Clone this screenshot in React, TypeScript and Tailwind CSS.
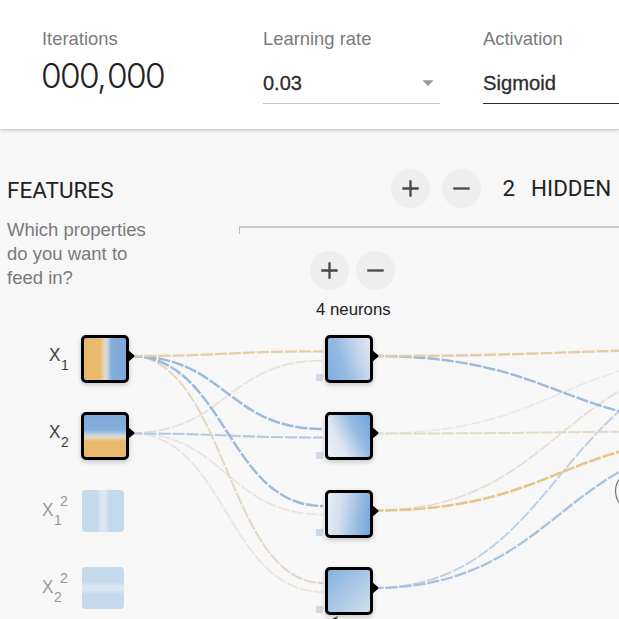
const ARIAL = "font-['Liberation_Sans',Arial,sans-serif]";

function RoundButton({ kind, className }: { kind: 'add' | 'remove'; className?: string }) {
  return (
    <button className={`flex size-[39px] items-center justify-center rounded-full bg-[#eeeeee] ${className ?? ''}`}>
      <svg width="17" height="17" viewBox="0 0 17 17" stroke="#484848" strokeWidth="2.3" fill="none">
        <path d={kind === 'add' ? 'M0.3 8.5H16.7M8.5 0.3V16.7' : 'M0.3 8.5H16.7'} />
      </svg>
    </button>
  );
}

type Link = { from: [number, number]; to: [number, number]; color: string; width: number };

const links: Link[] = [
  { from: [130, 433], to: [323, 592], color: '#e7e2da', width: 1.6 },
  { from: [130, 433], to: [323, 514.5], color: '#e6e3de', width: 1.6 },
  { from: [130, 433], to: [323, 360.5], color: '#e5e1db', width: 1.7 },
  { from: [130, 433.5], to: [323, 437.5], color: '#b5cae2', width: 2.1 },
  { from: [130, 356], to: [323, 583], color: '#e4d6bf', width: 1.9 },
  { from: [130, 356], to: [323, 506], color: '#9cbadc', width: 2.5 },
  { from: [130, 356], to: [323, 429], color: '#9cbadc', width: 2.5 },
  { from: [130, 356], to: [323, 351.3], color: '#e5cda5', width: 2.3 },
  { from: [373, 433.5], to: [747, 353.8], color: '#e9e7e4', width: 1.6 },
  { from: [373, 510.5], to: [747, 358.3], color: '#e4ddd2', width: 1.7 },
  { from: [373, 588], to: [747, 362.8], color: '#bdd0e5', width: 1.9 },
  { from: [373, 588], to: [747, 440], color: '#a7c1de', width: 2.3 },
  { from: [373, 510.5], to: [747, 435.5], color: '#e6c48e', width: 2.6 },
  { from: [373, 433.5], to: [747, 431.2], color: '#e4dac8', width: 2 },
  { from: [373, 356], to: [747, 426.5], color: '#9cbadc', width: 2.4 },
  { from: [373, 356], to: [747, 349.3], color: '#e2cda9', width: 2.4 },
];

function diagonal({ from, to }: Link) {
  const mid = (from[0] + to[0]) / 2;
  return `M${from[0]} ${from[1]}C${mid} ${from[1]} ${mid} ${to[1]} ${to[0]} ${to[1]}`;
}

const nodes = [
  { place: 'left-[81px] top-[10px]', fill: 'bg-[linear-gradient(90deg,#e9b96b_0%,#e8bb70_38%,#e6d9c2_50%,#d3dbe2_54%,#84aedb_65%,#7da9d9_100%)]' },
  { place: 'left-[81px] top-[87px]', fill: 'bg-[linear-gradient(180deg,#7da9d9_0%,#84aedb_36%,#c9d6e2_48%,#e6d9c2_53%,#e8bb70_63%,#e9b96b_100%)]' },
  { place: 'left-[325px] top-[10px]', fill: 'bg-[linear-gradient(72deg,#7fadde_0%,#93b9e1_35%,#c0d4ea_68%,#e2e8f2_100%)]' },
  { place: 'left-[325px] top-[87px]', fill: 'bg-[linear-gradient(62deg,#f0f2f6_0%,#dbe5f0_32%,#96bbe2_65%,#6fa4db_100%)]' },
  { place: 'left-[325px] top-[164.5px]', fill: 'bg-[linear-gradient(98deg,#e6ecf4_0%,#d3e0ef_30%,#98bce2_70%,#72a6db_100%)]' },
  { place: 'left-[325px] top-[242px]', fill: 'bg-[linear-gradient(135deg,#84b1df_0%,#a3c3e5_40%,#bad0e9_70%,#d2e0f0_100%)]' },
];

function Node({ place, fill }: { place: string; fill: string }) {
  return (
    <div className={`absolute size-12 ${place}`}>
      <div className={`size-full rounded-[5px] border-[3px] border-black shadow-[0_2px_5px_rgba(0,0,0,0.2)] ${fill} bg-origin-padding bg-no-repeat`} />
      <svg className="absolute -right-[6px] top-[15px]" width="7" height="12" viewBox="0 0 7 12">
        <path d="M0 0L6 5Q7 6 6 7L0 12Z" />
      </svg>
    </div>
  );
}

function Label({ place, sub, sup, inactive }: { place: string; sub: string; sup?: string; inactive?: boolean }) {
  return (
    <div className={`absolute h-8 w-8 ${ARIAL} ${place} ${inactive ? 'text-[#999999]' : 'text-[#404040]'}`}>
      <span className="block origin-left scale-x-90 text-[19px] leading-[22px]">X</span>
      <span className="absolute left-[12px] top-[13px] text-[14px] leading-4">{sub}</span>
      {sup && <span className="absolute left-[18px] top-[-6px] text-[14px] leading-4">{sup}</span>}
    </div>
  );
}

function Network() {
  return (
    <section className="relative h-[294px] overflow-hidden">
      <svg className="absolute inset-0" width="619" height="294" viewBox="0 325 619 294" fill="none">
        {links.map((link, i) => (
          <path key={i} d={diagonal(link)} stroke={link.color} strokeWidth={link.width} strokeDasharray="12.3 1.8" strokeDashoffset={link.from[0] === 130 ? 0 : 2} />
        ))}
        <circle cx="635.5" cy="491" r="20" stroke="#777" strokeWidth="1.2" fill="#fbfbfb" />
        <path d="M332 619L338 616L336.5 619Z" fill="#333" />
      </svg>
      <i className="absolute left-[316px] top-[49px] size-[7px] bg-[#d0dceb]" />
      <i className="absolute left-[316px] top-[126.5px] size-[7px] bg-[#d0dceb]" />
      <i className="absolute left-[316px] top-[204px] size-[7px] bg-[#cbdbea]" />
      <i className="absolute left-[316px] top-[281px] size-[7px] bg-[#cfdce8]" />
      {nodes.map((n) => (
        <Node key={n.place} {...n} />
      ))}
      <div className="absolute left-[82px] top-[165px] size-[42px] rounded-[4px] bg-[linear-gradient(90deg,#c5d9ec_0%,#c5d9ec_36%,#dbe6f1_45%,#dbe6f1_56%,#c5d9ec_65%)]" />
      <div className="absolute left-[82px] top-[242px] size-[42px] rounded-[4px] bg-[linear-gradient(180deg,#c5d9ec_0%,#c5d9ec_36%,#dbe6f1_45%,#dbe6f1_56%,#c5d9ec_65%)]" />
      <Label place="left-[49px] top-[19px]" sub="1" />
      <Label place="left-[49px] top-[96px]" sub="2" />
      <Label place="left-[42px] top-[174px]" sub="1" sup="2" inactive />
      <Label place="left-[42px] top-[251px]" sub="2" sup="2" inactive />
    </section>
  );
}

export default function App() {
  return (
    <div className={`h-[619px] w-[619px] overflow-hidden bg-[#f7f7f7] ${ARIAL}`}>
      <header className="relative flex h-[129px] bg-white pl-[42px] pt-[28px] shadow-[0_1px_3px_rgba(0,0,0,0.24)]">
        <div className="w-[221px] shrink-0">
          <div className="text-[18.4px] leading-[22px] text-[#7a7a7a]">Iterations</div>
          <div className="mt-[5px] -ml-px font-[Inter,sans-serif] text-[33.5px] font-light leading-[42px] tracking-[-1.7px] text-[#222222]">
            000<span className="mr-[2px]">,</span>000
          </div>
        </div>
        <div className="mr-[43px] w-[177px] shrink-0">
          <div className="text-[18.4px] leading-[22px] text-[#7a7a7a]">Learning rate</div>
          <div className="mt-[19px] flex h-[35px] items-start justify-between border-b border-[#c4c4c4] pr-[6px] text-[20px] leading-[28px] text-[#2c2c2c] [-webkit-text-stroke:0.3px_#2c2c2c]">
            0.03
            <svg className="mt-[11px]" width="12" height="7" viewBox="0 0 12 7">
              <path d="M0.5 0.3H11.5L6 6.3Z" fill="#999" />
            </svg>
          </div>
        </div>
        <div className="w-[177px] shrink-0">
          <div className="text-[18.4px] leading-[22px] text-[#7a7a7a]">Activation</div>
          <div className="mt-[19px] h-[35px] border-b border-[#2d2d44] text-[20.2px] leading-[28px] text-[#2c2c2c] [-webkit-text-stroke:0.3px_#2c2c2c]">Sigmoid</div>
        </div>
      </header>
      <div className="flex h-[196px]">
        <section className="w-[239px] shrink-0 pl-[7px] pt-[47px]">
          <h2 className="font-[Roboto,sans-serif] text-[22.5px] leading-[28px] text-[#222222]">FEATURES</h2>
          <p className="mt-[14px] w-[160px] text-[18.5px] leading-[24px] text-[#7a7a7a]">
            Which properties
            <br />
            do you want to
            <br />
            feed in?
          </p>
        </section>
        <section className="w-[380px] shrink-0 pt-[40px]">
          <div className="flex h-[39px] items-center whitespace-nowrap pl-[152px] font-[Roboto,sans-serif] text-[22.4px] text-[#222222]">
            <RoundButton kind="add" />
            <RoundButton kind="remove" className="ml-3" />
            <span className="ml-[21.5px]">2</span>
            <span className="ml-4">HIDDEN</span>
          </div>
          <div className="mt-[18px] h-[8px] border-l border-t-2 border-l-[#bdbdbd] border-t-[#cbcbcb]" />
          <div className="ml-[71px] mt-[17px] flex gap-[7px]">
            <RoundButton kind="add" />
            <RoundButton kind="remove" />
          </div>
          <div className="ml-[77px] mt-[10px] text-[16.8px] leading-[20px] text-[#222222]">4 neurons</div>
        </section>
      </div>
      <Network />
    </div>
  );
}
